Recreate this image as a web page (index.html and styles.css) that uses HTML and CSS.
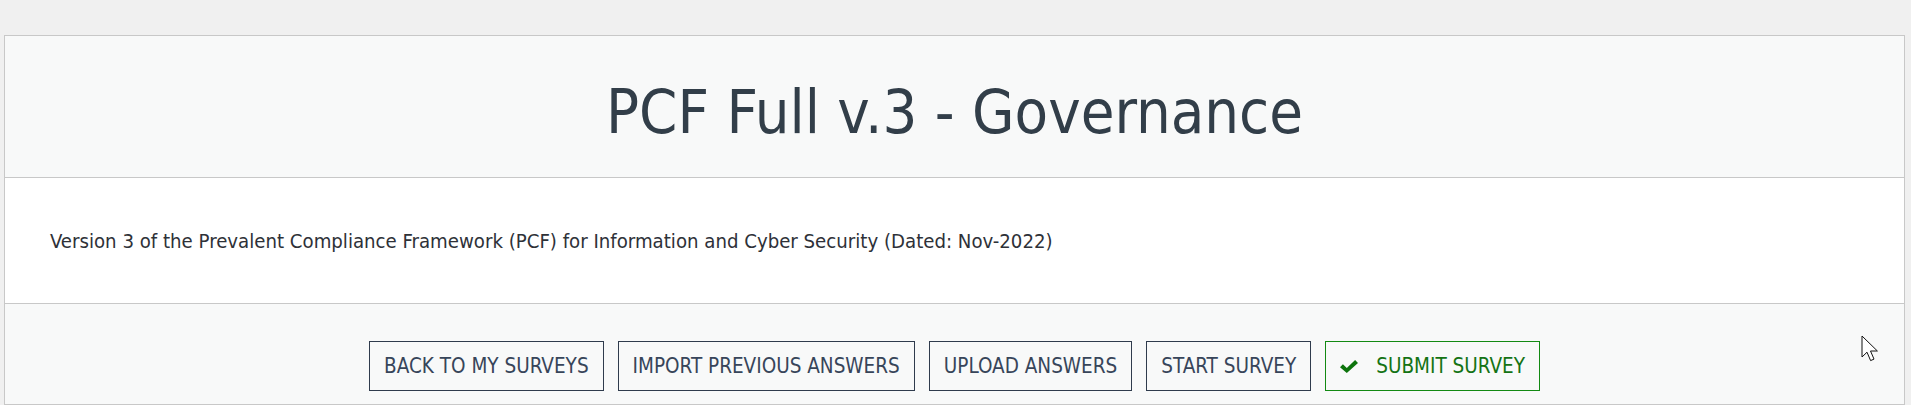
FILE: index.html
```html
<!DOCTYPE html>
<html lang="en">
<head>
<meta charset="utf-8">
<title>PCF Full v.3 - Governance</title>
<link rel="stylesheet" href="styles.css">
</head>
<body>
<main class="page">
  <section class="survey-card">
    <header class="survey-header">
      <h1 class="survey-title">PCF Full v.3 - Governance</h1>
    </header>
    <div class="survey-body">
      <p class="survey-desc">Version 3 of the Prevalent Compliance Framework (PCF) for Information and Cyber Security (Dated: Nov-2022)</p>
    </div>
    <footer class="survey-actions">
      <button class="btn" type="button">BACK TO MY SURVEYS</button>
      <button class="btn" type="button">IMPORT PREVIOUS ANSWERS</button>
      <button class="btn" type="button">UPLOAD ANSWERS</button>
      <button class="btn" type="button">START SURVEY</button>
      <button class="btn btn-submit" type="button">
        <svg class="check" viewBox="0 0 18 13" aria-hidden="true"><path d="M0 7.2 L2.9 4.3 L6.8 8.1 L15.1 0 L18 2.9 L6.8 13 Z"/></svg>
        <span>SUBMIT SURVEY</span>
      </button>
    </footer>
  </section>
  <svg class="cursor" viewBox="0 0 18 27" aria-hidden="true"><path d="M1 1 L1 22 L6 17.2 L9.6 25.6 L13 24.1 L9.5 16 L16.4 16 Z"/></svg>
</main>
</body>
</html>
```
FILE: styles.css
```css
html, body {
  margin: 0;
  padding: 0;
  background: #f0f0f0;
}
body {
  font-family: "DejaVu Sans Condensed", "DejaVu Sans", sans-serif;
  color: #333;
}
.page {
  position: relative;
  padding: 35px 6px 0 4px;
  height: 405px;
  box-sizing: border-box;
  overflow: hidden;
}
.survey-card {
  border: 1px solid #c8c8c8;
  background: #f8f9f9;
}
.survey-header {
  padding: 45px 0 35px;
  border-bottom: 1px solid #c8c8c8;
  text-align: center;
}
.survey-title {
  margin: 0;
  font-size: 61px;
  line-height: 61px;
  font-weight: normal;
  color: #323e49;
}
.survey-body {
  background: #fff;
  padding: 51px 45px 50px;
  border-bottom: 1px solid #c8c8c8;
}
.survey-desc {
  margin: 0;
  font-size: 20.2px;
  line-height: 24px;
  color: #2e3138;
}
.survey-actions {
  display: flex;
  justify-content: center;
  gap: 14px;
  padding: 37px 0 13px;
}
.btn {
  display: inline-flex;
  align-items: center;
  height: 50px;
  box-sizing: border-box;
  padding: 0 14px;
  border: 1px solid #2f3b4d;
  background: #f8f9f9;
  color: #37455a;
  font-family: "DejaVu Sans Condensed", "DejaVu Sans", sans-serif;
  font-size: 20.5px;
  line-height: 24px;
  border-radius: 0;
  cursor: pointer;
}
.btn-submit {
  border-color: #138a13;
  color: #147314;
  gap: 18px;
}
.check {
  width: 18px;
  height: 13px;
  fill: #0d740d;
}
.cursor {
  position: absolute;
  left: 1861px;
  top: 335px;
  width: 18px;
  height: 27px;
}
.cursor path {
  fill: #fff;
  stroke: #111;
  stroke-width: 1;
  stroke-linejoin: miter;
}
```
